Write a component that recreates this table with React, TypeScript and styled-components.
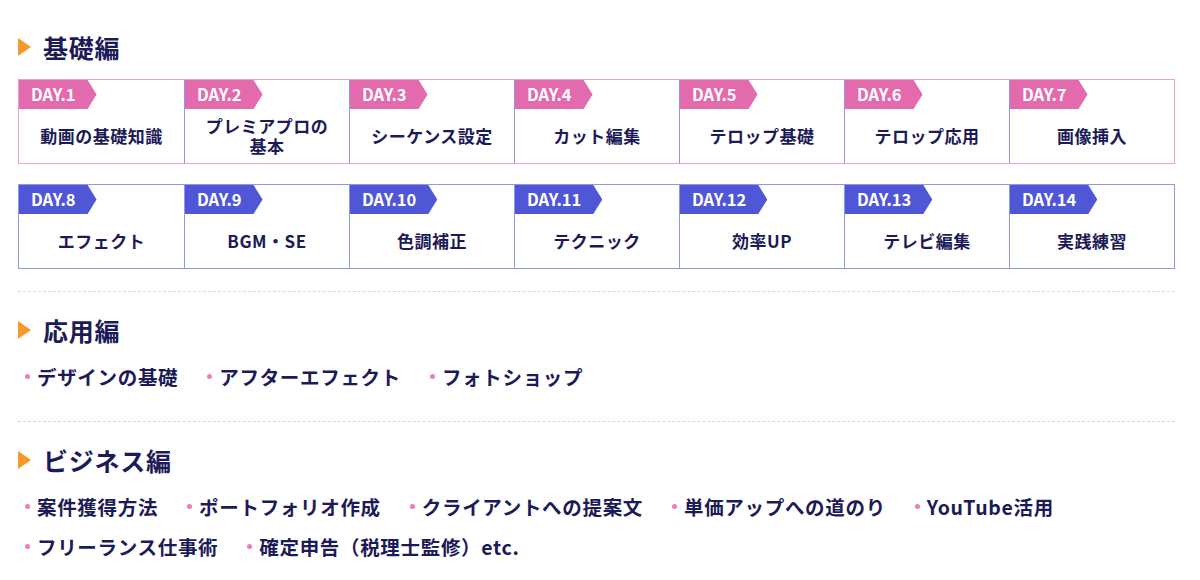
import React from "react";
import styled, { createGlobalStyle } from "styled-components";

const GlobalStyle = createGlobalStyle`
  body {
    margin: 0;
    background: #fff;
    font-family: "Noto Sans CJK JP", "Noto Sans", sans-serif;
    color: #1c1b58;
  }
`;

const Page = styled.div`
  width: 1157px;
  padding: 9px 0 0 18px;
`;

const Section = styled.section<{ last?: boolean }>`
  padding: 21px 0 22px;
  border-bottom: ${(p) => (p.last ? "none" : "1px dashed #d9d9d9")};
`;

const Heading = styled.h2`
  display: flex;
  align-items: center;
  gap: 12px;
  margin: 0 0 15px;
  height: 34px;
  font-size: 25px;
  font-weight: 700;
  letter-spacing: 0.03em;

  &::before {
    content: "";
    width: 0;
    height: 0;
    border-top: 9px solid transparent;
    border-bottom: 9px solid transparent;
    border-left: 13px solid #f7982b;
  }
`;

const Grid = styled.div<{ $border: string }>`
  display: grid;
  grid-template-columns: repeat(7, 1fr);
  border: 1px solid ${(p) => p.$border};

  & + & {
    margin-top: 20px;
  }
`;

const Cell = styled.div<{ $border: string }>`
  display: flex;
  flex-direction: column;
  height: 83px;

  & + & {
    border-left: 1px solid ${(p) => p.$border};
  }
`;

const Label = styled.div<{ $fill: string }>`
  align-self: flex-start;
  height: 29px;
  line-height: 29px;
  padding: 0 21px 0 12px;
  background: ${(p) => p.$fill};
  color: #fff;
  font-size: 16.5px;
  font-weight: 700;
  clip-path: polygon(0 0, calc(100% - 9px) 0, 100% 50%, calc(100% - 9px) 100%, 0 100%);
`;

const Topic = styled.div`
  flex: 1;
  display: flex;
  align-items: center;
  justify-content: center;
  text-align: center;
  padding: 0 18px;
  font-size: 17px;
  line-height: 20px;
  font-weight: 700;
  letter-spacing: 0.03em;
`;

const List = styled.ul`
  display: flex;
  flex-wrap: wrap;
  column-gap: 22px;
  row-gap: 12px;
  margin: 0;
  padding: 0 0 9px;
  list-style: none;
`;

const Item = styled.li`
  display: flex;
  align-items: center;
  gap: 7px;
  height: 28px;
  font-size: 19.5px;
  font-weight: 700;
  letter-spacing: 0.035em;

  &::before {
    content: "";
    width: 5px;
    height: 5px;
    margin-left: 7px;
    border-radius: 50%;
    background: #ec7dbc;
  }
`;

const pink = { fill: "#e36aac", border: "#eea0cc" };
const blue = { fill: "#4f57d6", border: "#9096e8" };

const week1 = [
  "動画の基礎知識",
  "プレミアプロの基本",
  "シーケンス設定",
  "カット編集",
  "テロップ基礎",
  "テロップ応用",
  "画像挿入",
];

const week2 = [
  "エフェクト",
  "BGM・SE",
  "色調補正",
  "テクニック",
  "効率UP",
  "テレビ編集",
  "実践練習",
];

const advanced = ["デザインの基礎", "アフターエフェクト", "フォトショップ"];

const business = [
  "案件獲得方法",
  "ポートフォリオ作成",
  "クライアントへの提案文",
  "単価アップへの道のり",
  "YouTube活用",
  "フリーランス仕事術",
  "確定申告（税理士監修）etc.",
];

const DayRow: React.FC<{ topics: string[]; start: number; color: { fill: string; border: string } }> = ({
  topics,
  start,
  color,
}) => (
  <Grid $border={color.border}>
    {topics.map((t, i) => (
      <Cell key={t} $border={color.border}>
        <Label $fill={color.fill}>DAY.{start + i}</Label>
        <Topic>{t}</Topic>
      </Cell>
    ))}
  </Grid>
);

export default function App() {
  return (
    <>
      <GlobalStyle />
      <Page>
        <Section>
          <Heading>基礎編</Heading>
          <DayRow topics={week1} start={1} color={pink} />
          <DayRow topics={week2} start={8} color={blue} />
        </Section>
        <Section>
          <Heading>応用編</Heading>
          <List>
            {advanced.map((a) => (
              <Item key={a}>{a}</Item>
            ))}
          </List>
        </Section>
        <Section last>
          <Heading>ビジネス編</Heading>
          <List>
            {business.map((b) => (
              <Item key={b}>{b}</Item>
            ))}
          </List>
        </Section>
      </Page>
    </>
  );
}
